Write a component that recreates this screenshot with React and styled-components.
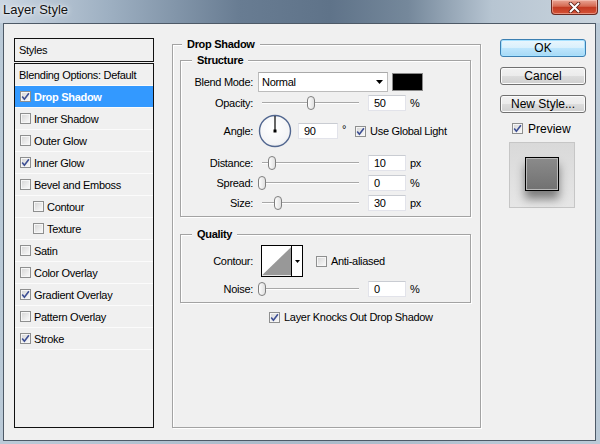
import React from "react";
import styled, { createGlobalStyle } from "styled-components";

const GlobalStyle = createGlobalStyle`
  html, body {
    margin: 0;
    padding: 0;
    background: #f0f0f0;
  }
  body {
    font-family: "Liberation Sans", Arial, sans-serif;
    font-size: 11px;
    color: #000;
  }
`;

const Window = styled.div`
  width: 600px;
  height: 444px;
  display: flex;
  flex-direction: column;
  background:
    linear-gradient(to bottom, transparent 23px, rgba(184, 200, 214, 0.85) 23px),
    linear-gradient(to right, #cbd6e2 0%, #9eb0c2 18%, #687c92 40%, #5f7389 55%, #75889b 68%, #b7c5d2 82%, #c9d4dd 100%);
`;

const TitleBar = styled.div`
  height: 23px;
  display: flex;
  align-items: flex-start;
  justify-content: space-between;
  padding: 0 2px 0 3px;
  box-sizing: border-box;
`;

const Title = styled.div`
  font-family: "Liberation Sans", Arial, sans-serif;
  font-size: 13px;
  line-height: 20px;
  color: #111;
  text-shadow: 0 0 6px rgba(255, 255, 255, 0.9), 0 0 3px rgba(255, 255, 255, 0.9);
`;

const CloseButton = styled.div`
  width: 47px;
  height: 15px;
  box-sizing: border-box;
  border: 1px solid #6a2a21;
  border-top: none;
  border-radius: 0 0 4px 4px;
  background: linear-gradient(#e9a595 0%, #d56a52 45%, #c23a22 52%, #d55236 100%);
  box-shadow: inset 0 0 0 1px rgba(255, 220, 210, 0.45);
  display: flex;
  align-items: center;
  justify-content: center;
`;

const Frame = styled.div`
  flex: 1;
  display: flex;
  padding: 0 4px 3px 3px;
`;

const Client = styled.div`
  flex: 1;
  display: flex;
  align-items: flex-start;
  border: 1px solid #4e5a67;
  background: #f0f0f0;
  padding: 14px 9px 0 10px;
`;

/* ---------- left styles list ---------- */

const StylesPanel = styled.div`
  width: 140px;
  display: flex;
  flex-direction: column;
  gap: 1px;
`;

const StylesHeader = styled.div`
  height: 24px;
  box-sizing: border-box;
  border: 1px solid #111;
  display: flex;
  align-items: center;
  padding-left: 4px;
  letter-spacing: -0.3px;
`;

const StylesList = styled.div`
  height: 365px;
  box-sizing: border-box;
  border: 1px solid #111;
  display: flex;
  flex-direction: column;
`;

const ListRow = styled.div`
  height: 22px;
  box-sizing: border-box;
  border-bottom: 1px solid #fbfbfb;
  display: flex;
  align-items: center;
  gap: 3px;
  padding-left: ${(p) => p.$indent}px;
  letter-spacing: -0.3px;
  white-space: nowrap;
  background: ${(p) => (p.$selected ? "#3399ff" : "transparent")};
  color: ${(p) => (p.$selected ? "#fff" : "#000")};
  font-weight: ${(p) => (p.$selected ? "bold" : "normal")};
`;

const Box = styled.span`
  width: 11px;
  height: 11px;
  box-sizing: border-box;
  flex-shrink: 0;
  border: 1px solid #8e8f8f;
  background: linear-gradient(135deg, #d4d4d4 0%, #f0f0f0 70%, #fafafa 100%);
  box-shadow: inset 0 0 0 1px #f6f6f6;
  display: flex;
  align-items: center;
  justify-content: center;
`;

const Checkbox = ({ checked }) => (
  <Box>
    {checked && (
      <svg width="9" height="9" viewBox="0 0 9 9">
        <path d="M1.2 4.6 L3.4 7.3 L7.9 1.2" fill="none" stroke="#3d4f94" strokeWidth="1.6" />
      </svg>
    )}
  </Box>
);

/* ---------- middle group boxes ---------- */

const Group = styled.div`
  position: relative;
  box-sizing: border-box;
  border: 1px solid #a3a3a3;
  box-shadow: inset 1px 1px 0 #fff, 1px 1px 0 #fff;
  height: ${(p) => (p.$h ? `${p.$h}px` : "auto")};
  padding: ${(p) => p.$pad};
  margin-top: ${(p) => p.$mt || 0}px;
`;

const Legend = styled.div`
  position: absolute;
  top: -7px;
  left: ${(p) => p.$left}px;
  padding: 0 5px;
  line-height: 13px;
  background: #f0f0f0;
  font-weight: bold;
  letter-spacing: -0.3px;
`;

const MiddlePanel = styled.div`
  width: 309px;
  margin-left: 18px;
  margin-top: 6px;
`;

const FormRow = styled.div`
  display: flex;
  align-items: center;
  height: ${(p) => p.$h}px;
  margin-top: ${(p) => p.$mt || 0}px;
  padding-left: ${(p) => p.$pl || 0}px;
  letter-spacing: -0.3px;
  white-space: nowrap;
`;

const Label = styled.div`
  width: 72px;
  flex-shrink: 0;
  text-align: right;
  margin-right: ${(p) => (p.$mr === undefined ? 5 : p.$mr)}px;
`;

const Select = styled.div`
  width: 130px;
  height: 20px;
  box-sizing: border-box;
  border: 1px solid #bcbcbc;
  border-top-color: #a9a9a9;
  background: #fff;
  display: flex;
  align-items: center;
  justify-content: space-between;
  padding: 0 4px 0 3px;
`;

const Swatch = styled.div`
  width: 31px;
  height: 18px;
  box-sizing: border-box;
  margin-left: 4px;
  border: 1px solid #8a8a8a;
  background: #000;
`;

const Track = styled.div`
  position: relative;
  width: 97px;
  height: 16px;
  margin-left: 4px;
  flex-shrink: 0;
  &::before {
    content: "";
    position: absolute;
    left: 0;
    right: 0;
    top: 7px;
    height: 1px;
    background: #a8a8a8;
    box-shadow: 0 1px 0 #fff;
  }
`;

const Thumb = styled.div`
  position: absolute;
  top: 1px;
  left: calc(${(p) => p.$pos * 100}% - 4px);
  width: 8px;
  height: 14px;
  box-sizing: border-box;
  border: 1px solid #7f7f7f;
  border-radius: 4px;
  background: linear-gradient(to right, #fdfdfd, #e0e0e0);
`;

const Slider = ({ pos }) => (
  <Track>
    <Thumb $pos={pos} />
  </Track>
);

const Field = styled.div`
  width: ${(p) => p.$w}px;
  height: 16px;
  box-sizing: border-box;
  margin-left: ${(p) => p.$ml}px;
  flex-shrink: 0;
  border: 1px solid #e2e3ea;
  border-top-color: #c9ccd2;
  background: #fff;
  padding-left: 5px;
  display: flex;
  align-items: center;
`;

const Unit = styled.span`
  margin-left: ${(p) => p.$ml || 4}px;
  align-self: ${(p) => (p.$top ? "flex-start" : "center")};
  margin-top: ${(p) => (p.$top ? 10 : 0)}px;
`;

const CheckLabel = styled.div`
  display: flex;
  align-items: center;
  gap: ${(p) => p.$gap || 3}px;
  margin-left: ${(p) => p.$ml || 0}px;
  font-size: ${(p) => p.$size || 11}px;
  letter-spacing: ${(p) => (p.$size ? 0 : -0.3)}px;
`;

const Dial = () => (
  <svg width="34" height="34" viewBox="0 0 34 34" style={{ flexShrink: 0 }}>
    <defs>
      <radialGradient id="dialFill" cx="45%" cy="40%" r="65%">
        <stop offset="0%" stopColor="#ffffff" />
        <stop offset="80%" stopColor="#f3f4f6" />
        <stop offset="100%" stopColor="#dfe3e8" />
      </radialGradient>
    </defs>
    <circle cx="17" cy="17" r="15.5" fill="url(#dialFill)" stroke="#51668f" strokeWidth="1.4" />
    <line x1="17" y1="17" x2="17" y2="2" stroke="#000" strokeWidth="1.2" />
    <rect x="15.5" y="15.5" width="3" height="3" fill="#000" />
  </svg>
);

const ContourPicker = styled.div`
  width: 42px;
  height: 32px;
  box-sizing: border-box;
  margin-left: 4px;
  border: 1px solid #000;
  background: #fff;
  display: flex;
`;

const ContourArrow = styled.div`
  width: 10px;
  border-left: 1px solid #000;
  display: flex;
  align-items: center;
  justify-content: center;
`;

/* ---------- right column ---------- */

const RightPanel = styled.div`
  width: 86px;
  margin-left: 19px;
  margin-top: 1px;
  display: flex;
  flex-direction: column;
  gap: 10px;
`;

const Button = styled.div`
  height: 18px;
  box-sizing: border-box;
  border: 1px solid ${(p) => (p.$primary ? "#3c7fb1" : "#707070")};
  border-radius: 3px;
  background: ${(p) =>
    p.$primary
      ? "linear-gradient(#eaf6fd 0%, #d9f0fc 50%, #bee6fd 50%, #a7d9f5 100%)"
      : "linear-gradient(#f2f2f2 0%, #ebebeb 50%, #dddddd 50%, #cfcfcf 100%)"};
  box-shadow: inset 0 0 0 1px ${(p) => (p.$primary ? "#a6e1ff" : "#fbfbfb")};
  font-size: 12px;
  display: flex;
  align-items: center;
  justify-content: center;
`;

const PreviewRow = styled.div`
  height: 13px;
  margin-top: -1px;
  padding-left: 12px;
  display: flex;
  align-items: center;
`;

const PreviewBox = styled.div`
  width: 66px;
  height: 66px;
  box-sizing: border-box;
  margin-top: -3px;
  margin-left: 9px;
  border: 1px solid #c6c6c6;
  background: linear-gradient(#d9d9d9, #e6e6e6);
  display: flex;
  align-items: center;
  justify-content: center;
  padding-bottom: 2px;
`;

const PreviewSquare = styled.div`
  width: 34px;
  height: 34px;
  box-sizing: border-box;
  border: 1px solid #000;
  background: linear-gradient(#8b8b8b, #717171);
  box-shadow: inset 0 0 0 1px #b9b9b9, 0 8px 9px rgba(0, 0, 0, 0.45);
`;

const items = [
  { label: "Drop Shadow", checked: true, selected: true },
  { label: "Inner Shadow" },
  { label: "Outer Glow" },
  { label: "Inner Glow", checked: true },
  { label: "Bevel and Emboss" },
  { label: "Contour", child: true },
  { label: "Texture", child: true },
  { label: "Satin" },
  { label: "Color Overlay" },
  { label: "Gradient Overlay", checked: true },
  { label: "Pattern Overlay" },
  { label: "Stroke", checked: true },
];

const SliderRow = ({ label, pos, value, unit, mt }) => (
  <FormRow $h={16} $mt={mt}>
    <Label>{label}</Label>
    <Slider pos={pos} />
    <Field $w={38} $ml={9}>{value}</Field>
    <Unit>{unit}</Unit>
  </FormRow>
);

export default function App() {
  return (
    <>
      <GlobalStyle />
      <Window>
        <TitleBar>
          <Title>Layer Style</Title>
          <CloseButton>
            <svg width="13" height="11" viewBox="0 0 13 11">
              <path d="M2.5 1.5 L10.5 9.5 M10.5 1.5 L2.5 9.5" stroke="#5a1e16" strokeWidth="3.6" strokeLinecap="round" />
              <path d="M2.5 1.5 L10.5 9.5 M10.5 1.5 L2.5 9.5" stroke="#fff" strokeWidth="2" strokeLinecap="round" />
            </svg>
          </CloseButton>
        </TitleBar>
        <Frame>
          <Client>
            <StylesPanel>
              <StylesHeader>Styles</StylesHeader>
              <StylesList>
                <ListRow $indent={4}>Blending Options: Default</ListRow>
                {items.map((it) => (
                  <ListRow key={it.label} $indent={it.child ? 18 : 5} $selected={it.selected}>
                    <Checkbox checked={it.checked} />
                    {it.label}
                  </ListRow>
                ))}
              </StylesList>
            </StylesPanel>

            <MiddlePanel>
              <Group $h={384} $pad="15px 9px 0 7px">
                <Legend $left={9}>Drop Shadow</Legend>

                <Group $pad="11px 0 5px 0">
                  <Legend $left={11}>Structure</Legend>
                  <FormRow $h={20}>
                    <Label>Blend Mode:</Label>
                    <Select>
                      <span>Normal</span>
                      <svg width="7" height="4" viewBox="0 0 7 4">
                        <polygon points="0,0 7,0 3.5,4" fill="#000" />
                      </svg>
                    </Select>
                    <Swatch />
                  </FormRow>
                  <SliderRow label="Opacity:" pos={0.5} value="50" unit="%" mt={3} />
                  <FormRow $h={36} $mt={2}>
                    <Label>Angle:</Label>
                    <Dial />
                    <Field $w={40} $ml={6}>90</Field>
                    <Unit $ml={4} $top>°</Unit>
                    <CheckLabel $ml={9} $gap={4}>
                      <Checkbox checked />
                      Use Global Light
                    </CheckLabel>
                  </FormRow>
                  <SliderRow label="Distance:" pos={0.1} value="10" unit="px" mt={6} />
                  <SliderRow label="Spread:" pos={0} value="0" unit="%" mt={4} />
                  <SliderRow label="Size:" pos={0.17} value="30" unit="px" mt={4} />
                </Group>

                <Group $pad="10px 0 5px 0" $mt={17}>
                  <Legend $left={11}>Quality</Legend>
                  <FormRow $h={32}>
                    <Label $mr={4}>Contour:</Label>
                    <ContourPicker>
                      <svg width="31" height="30" viewBox="0 0 31 30">
                        <polygon points="0,30 31,0 31,30" fill="#989898" />
                      </svg>
                      <ContourArrow>
                        <svg width="5" height="3" viewBox="0 0 5 3">
                          <polygon points="0,0 5,0 2.5,3" fill="#000" />
                        </svg>
                      </ContourArrow>
                    </ContourPicker>
                    <CheckLabel $ml={13} $gap={4}>
                      <Checkbox />
                      Anti-aliased
                    </CheckLabel>
                  </FormRow>
                  <SliderRow label="Noise:" pos={0} value="0" unit="%" mt={4} />
                </Group>

                <FormRow $h={12} $mt={8} $pl={89}>
                  <CheckLabel $gap={4}>
                    <Checkbox checked />
                    Layer Knocks Out Drop Shadow
                  </CheckLabel>
                </FormRow>
              </Group>
            </MiddlePanel>

            <RightPanel>
              <Button $primary>OK</Button>
              <Button>Cancel</Button>
              <Button>New Style...</Button>
              <PreviewRow>
                <CheckLabel $gap={5} $size={12}>
                  <Checkbox checked />
                  Preview
                </CheckLabel>
              </PreviewRow>
              <PreviewBox>
                <PreviewSquare />
              </PreviewBox>
            </RightPanel>
          </Client>
        </Frame>
      </Window>
    </>
  );
}
